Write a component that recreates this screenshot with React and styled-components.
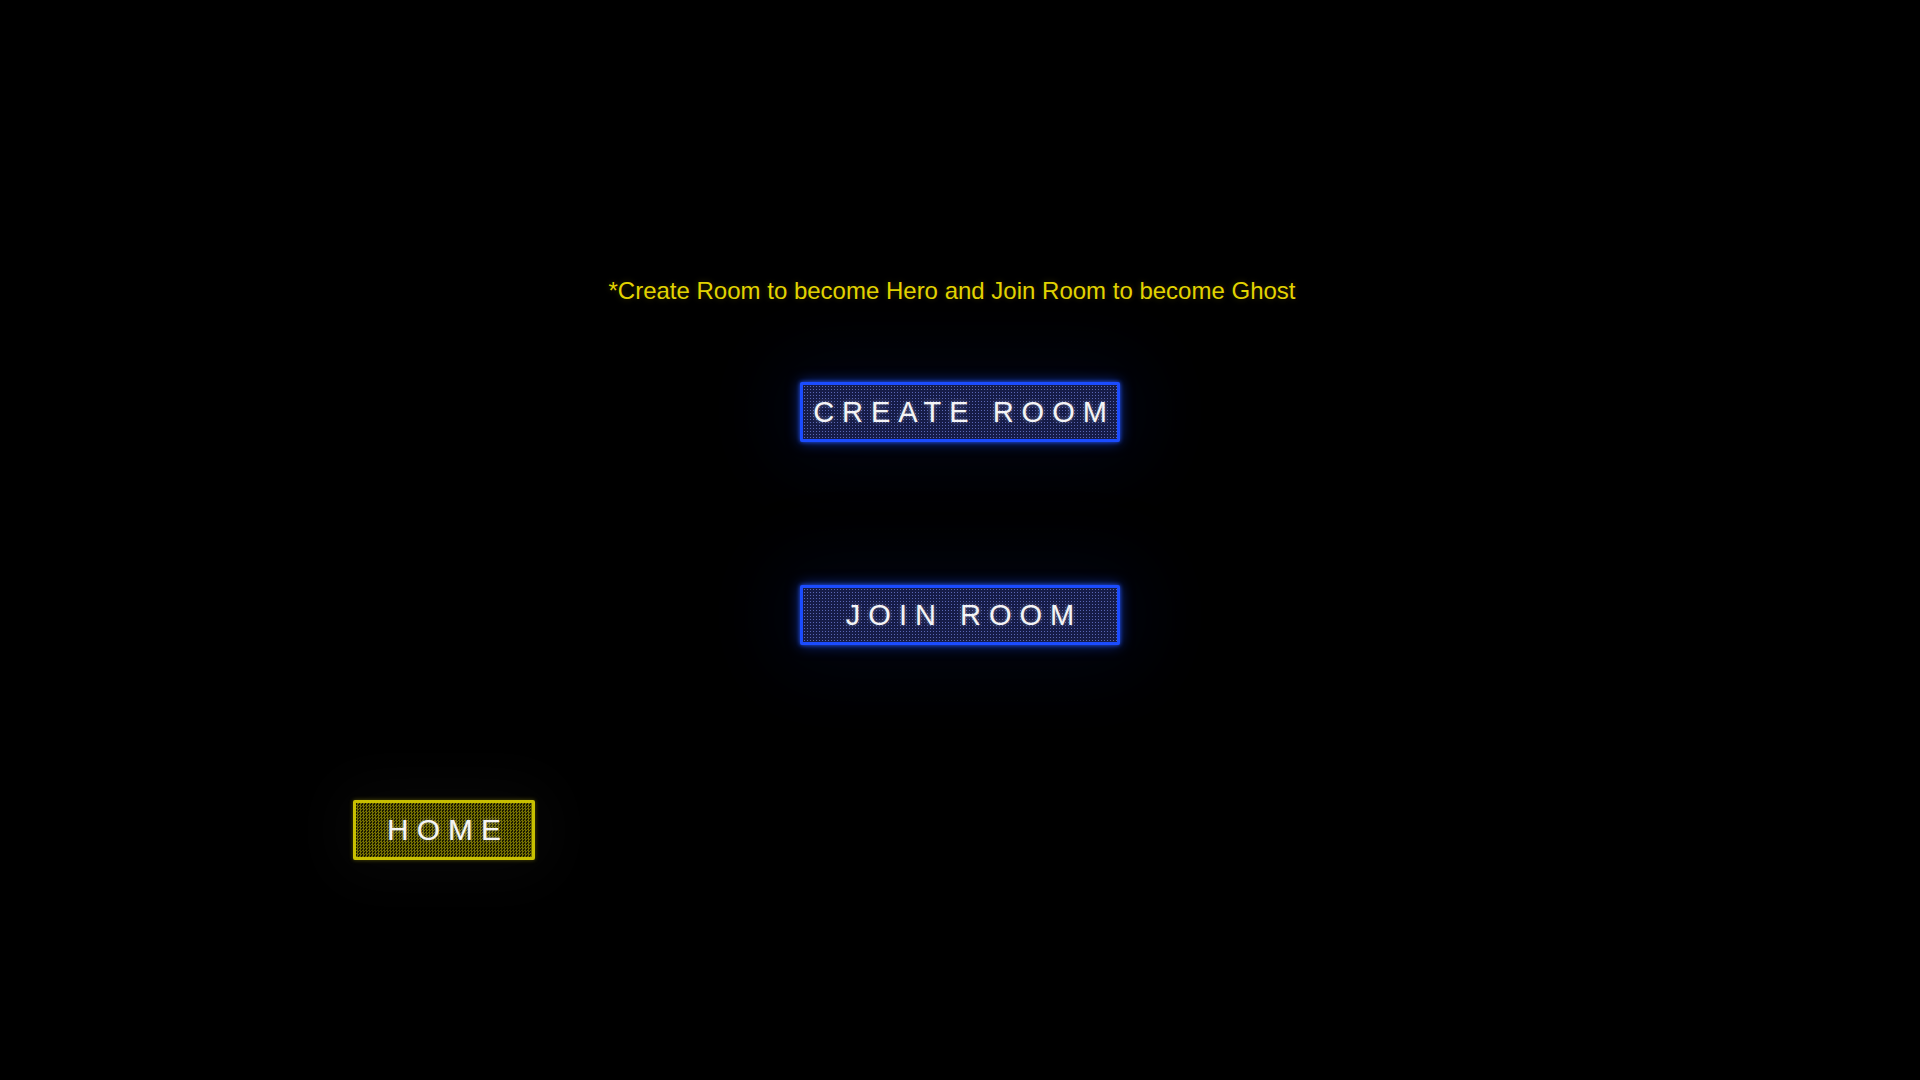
import React from "react";
import styled, { createGlobalStyle, css } from "styled-components";

const Global = createGlobalStyle`
  html, body { margin: 0; padding: 0; background: #000; }
  body { font-family: "Liberation Sans", Arial, sans-serif; }
`;

const Page = styled.div`
  width: 1920px;
  height: 1080px;
  background: #000;
  display: flex;
  flex-direction: column;
  align-items: center;
  padding-top: 277px;
  box-sizing: border-box;
  overflow: hidden;
`;

const Hint = styled.p`
  margin: 0 16px 0 0;
  height: 28px;
  line-height: 28px;
  font-size: 24px;
  color: #e2d300;
  text-shadow: 0 0 6px rgba(200, 180, 0, 0.25);
  white-space: nowrap;
`;

const blueSkin = css`
  border: 3px solid #1b4cff;
  background-color: #161c48;
  background-image: radial-gradient(circle, #5a66b4 0.7px, transparent 0.9px);
  background-size: 3px 3px;
  box-shadow: 0 0 4px rgba(40, 90, 255, 0.9), 0 0 14px rgba(30, 80, 255, 0.55),
    0 0 80px 24px rgba(20, 40, 140, 0.12);
`;

const yellowSkin = css`
  border: 3px solid #c8c000;
  background-color: #222100;
  background-image: repeating-conic-gradient(#757000 0 25%, #1c1b00 0 50%);
  background-size: 3px 3px;
  box-shadow: 0 0 4px rgba(200, 190, 0, 0.4), 0 0 60px 16px rgba(120, 120, 120, 0.06);
`;

const Button = styled.button`
  box-sizing: border-box;
  width: ${(p) => p.$w}px;
  height: 60px;
  margin-top: ${(p) => p.$mt}px;
  display: flex;
  align-items: center;
  justify-content: center;
  padding: 0 0 0 8px;
  font-family: "Liberation Sans", Arial, sans-serif;
  font-size: ${(p) => p.$fs}px;
  letter-spacing: 8px;
  color: #f4f4f4;
  text-shadow: 0 0 4px rgba(255, 255, 255, 0.35);
  cursor: pointer;
  border-radius: 2px;
  ${(p) => (p.$tone === "yellow" ? yellowSkin : blueSkin)}
`;

const HomeRow = styled.div`
  align-self: stretch;
  padding-left: 353px;
  display: flex;
`;

export default function App() {
  return (
    <>
      <Global />
      <Page>
        <Hint>*Create Room to become Hero and Join Room to become Ghost</Hint>
        <Button $w={320} $mt={77} $fs={29}>CREATE ROOM</Button>
        <Button $w={320} $mt={143} $fs={29}>JOIN ROOM</Button>
        <HomeRow>
          <Button $w={182} $mt={155} $fs={30} $tone="yellow">HOME</Button>
        </HomeRow>
      </Page>
    </>
  );
}
